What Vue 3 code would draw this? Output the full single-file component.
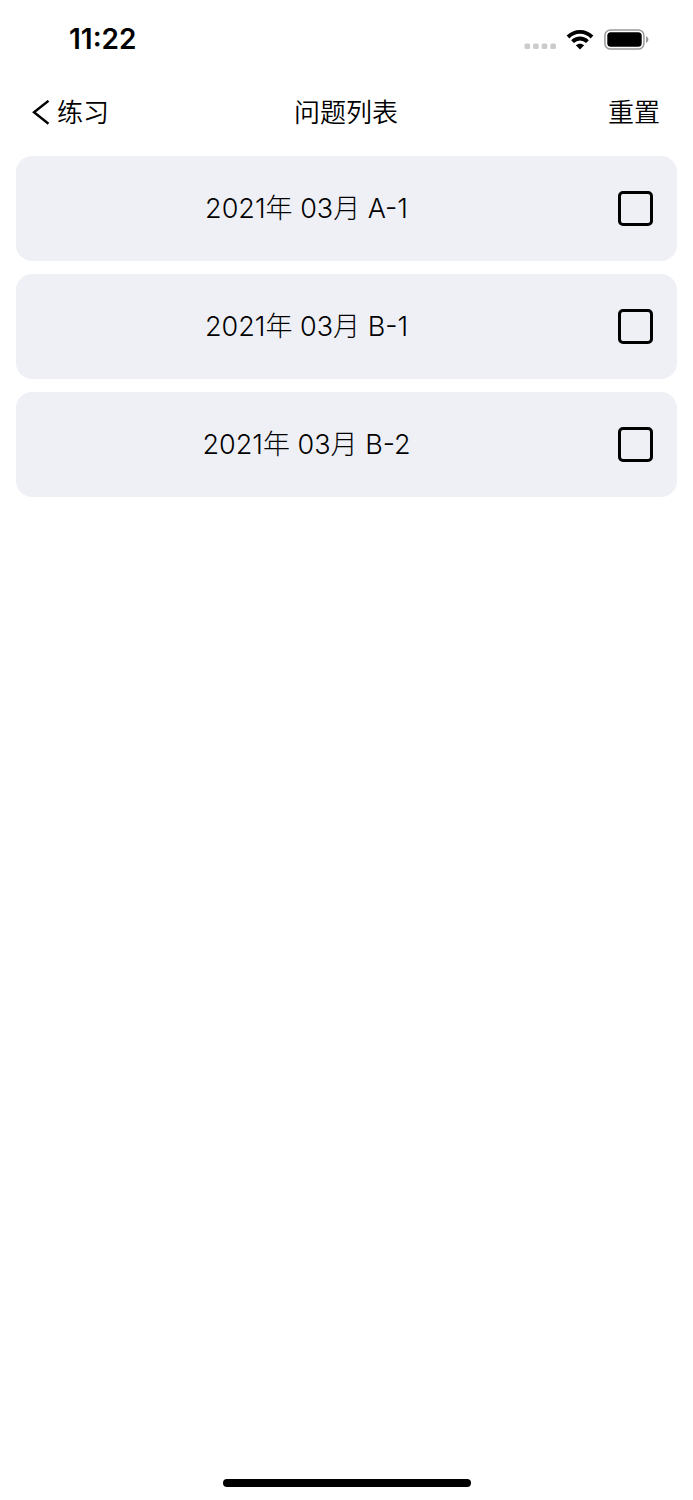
<template>
  <div class="screen">
    <!-- 状态栏 -->
    <header class="status-bar">
      <span class="time">11:22</span>
      <div class="status-icons">
        <svg class="signal" width="32" height="7" viewBox="0 0 32 7" fill="#cbcbcb">
          <rect x="0.5" y="0.5" width="5.6" height="5.6" rx="1.6"/>
          <rect x="9.1" y="0.5" width="5.6" height="5.6" rx="1.6"/>
          <rect x="17.7" y="0.5" width="5.6" height="5.6" rx="1.6"/>
          <rect x="26.3" y="0.5" width="5.6" height="5.6" rx="1.6"/>
        </svg>
        <svg width="28" height="21" viewBox="0 0 28 21">
          <path d="M2 8C8.8 1.2 19.2 1.2 26 8" fill="none" stroke="#000" stroke-width="3.9"/>
          <path d="M6.5 12.7C10.9 8.5 17.1 8.5 21.5 12.7" fill="none" stroke="#000" stroke-width="3.9"/>
          <path d="M14 20.4L9.8 16.3C12.1 14.1 15.9 14.1 18.2 16.3Z" fill="#000"/>
        </svg>
        <svg width="45" height="21" viewBox="0 0 45 21">
          <rect x="0.9" y="0.9" width="39" height="19.2" rx="5.6" fill="none" stroke="#999" stroke-width="1.5"/>
          <rect x="3.3" y="3.2" width="34.4" height="14.6" rx="3.6" fill="#000"/>
          <path d="M42 7.2C45.2 8.4 45.2 12.8 42 14Z" fill="#999"/>
        </svg>
      </div>
    </header>

    <!-- 导航栏 -->
    <nav class="nav-bar">
      <button class="nav-btn back" type="button">
        <svg width="18" height="26" viewBox="0 0 18 26" fill="none" stroke="#000" stroke-width="2.4">
          <polyline points="16.5 0.8 2 12.3 16.5 23.8"/>
        </svg>
        <span>练习</span>
      </button>
      <h1 class="title">问题列表</h1>
      <button class="nav-btn reset" type="button" @click="reset">重置</button>
    </nav>

    <!-- 问题列表 -->
    <main class="list">
      <label v-for="item in questions" :key="item.name" class="card">
        <span class="card-name">{{ item.name }}</span>
        <input v-model="item.done" class="check" type="checkbox">
      </label>
    </main>

    <footer class="home">
      <div class="home-indicator"></div>
    </footer>
  </div>
</template>

<script setup>
import { ref } from 'vue'

const questions = ref([
  { name: '2021年 03月 A-1', done: false },
  { name: '2021年 03月 B-1', done: false },
  { name: '2021年 03月 B-2', done: false }
])

function reset() {
  questions.value.forEach((item) => {
    item.done = false
  })
}
</script>

<style>
body {
  background: #fff;
}
</style>

<style scoped>
.screen {
  display: flex;
  flex-direction: column;
  min-height: 100vh;
  color: #000;
  font-family: Inter, "Noto Sans CJK SC", sans-serif;
}

.status-bar {
  display: flex;
  align-items: center;
  justify-content: space-between;
  height: 78px;
  padding: 0 44px 0 69px;
}

.time {
  font-size: 28px;
  font-weight: 600;
}

.status-icons {
  display: flex;
  align-items: flex-end;
  gap: 10px;
}

.nav-bar {
  display: grid;
  grid-template-columns: 1fr auto 1fr;
  align-items: center;
  height: 70px;
  padding: 0 33px 0 32px;
  margin-bottom: 8px;
}

.nav-btn {
  display: flex;
  align-items: center;
  gap: 7px;
  padding: 0;
  border: 0;
  background: none;
  color: inherit;
  font: inherit;
  font-size: 26px;
  font-weight: 350;
  line-height: 36px;
  cursor: pointer;
}

.back {
  justify-self: start;
}

.reset {
  justify-self: end;
}

.title {
  margin: 0;
  font-size: 26px;
  font-weight: 350;
  line-height: 36px;
}

.list {
  display: flex;
  flex: 1;
  flex-direction: column;
  gap: 13px;
  padding: 0 16px;
}

.card {
  display: flex;
  align-items: center;
  height: 105px;
  border-radius: 16px;
  background: #eff0f6;
  cursor: pointer;
}

.card-name {
  flex: 1;
  font-size: 27px;
  font-weight: 300;
  line-height: 40px;
  text-align: center;
}

.check {
  appearance: none;
  width: 35px;
  height: 35px;
  margin: 0 24px 0 21px;
  border: 3px solid #000;
  border-radius: 5px;
  cursor: pointer;
}

.check:checked {
  background: #000;
}

.home {
  display: flex;
  justify-content: center;
  padding: 13px 0;
}

.home-indicator {
  width: 248px;
  height: 8px;
  border-radius: 4px;
  background: #000;
}
</style>
